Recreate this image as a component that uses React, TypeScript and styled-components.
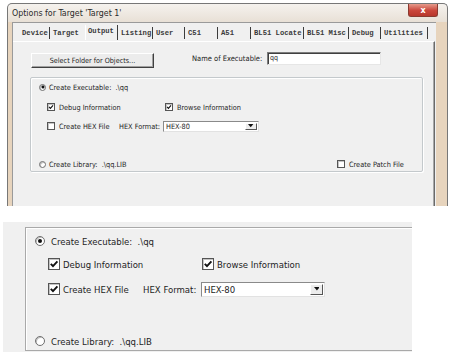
import React from "react";
import styled, { createGlobalStyle } from "styled-components";

const FONT = `"DejaVu Sans Condensed", "Liberation Sans", Arial, sans-serif`;

const GlobalStyle = createGlobalStyle`
  html, body {
    margin: 0;
    padding: 0;
    background: #fff;
  }
  body {
    width: 451px;
    height: 359px;
    overflow: hidden;
    font-family: ${FONT};
    color: #1e1e1e;
  }
`;

type Metrics = {
  font: number;
  box: number;
  radio: number;
  rowH: number;
  rowTops: number[];
  radioX: number;
  radioGap: number;
  checkX: number;
  checkGap: number;
  browseX: number;
  hexLabelX: number;
  selectX: number;
  selectW: number;
  selectH: number;
  btnW: number;
  patchX?: number;
  hexChecked: boolean;
};

const TOP: Metrics = {
  font: 7.3,
  box: 8,
  radio: 7,
  rowH: 14,
  rowTops: [2, 6, 5, 24],
  radioX: 8,
  radioGap: 3,
  checkX: 16,
  checkGap: 4,
  browseX: 134,
  hexLabelX: 88,
  selectX: 132,
  selectW: 96,
  selectH: 11,
  btnW: 12,
  patchX: 306,
  hexChecked: false,
};

const ZOOM: Metrics = {
  font: 9.5,
  box: 12,
  radio: 10,
  rowH: 18,
  rowTops: [4, 5, 7, 34],
  radioX: 9,
  radioGap: 6,
  checkX: 22,
  checkGap: 3,
  browseX: 176,
  hexLabelX: 117,
  selectX: 175,
  selectW: 124,
  selectH: 15,
  btnW: 13,
  hexChecked: true,
};

/* ---------- window chrome ---------- */

const Shot = styled.div`
  padding: 3px 0 0 7px;
`;

const Window = styled.div`
  width: 441px;
  display: flex;
  flex-direction: column;
`;

const TitleBar = styled.div`
  height: 19px;
  display: flex;
  align-items: flex-start;
  box-sizing: border-box;
  border: 1px solid #777;
  border-bottom: none;
  border-radius: 5px 5px 0 0;
  background: linear-gradient(#f5f2ee, #e8e0d6);
`;

const Title = styled.span`
  font-size: 8.8px;
  line-height: 18px;
  padding-left: 4px;
  color: #2a2a2a;
`;

const CloseButton = styled.span`
  margin-left: auto;
  margin-right: 9px;
  width: 30px;
  height: 13px;
  display: flex;
  align-items: center;
  justify-content: center;
  border: 1px solid #8a3a30;
  border-top: none;
  border-radius: 0 0 3px 3px;
  box-sizing: border-box;
  background: linear-gradient(#e69b8c, #c9453a 55%, #b8372c);
  color: #fff;
  font-family: "DejaVu Sans", sans-serif;
  font-size: 8px;
  font-weight: bold;
`;

const Frame = styled.div`
  height: 184px;
  display: flex;
  box-sizing: border-box;
  border-left: 1px solid #777;
  border-right: 1px solid #777;
  background: #e7d4bd;
  padding: 0 11px 0 4px;
`;

const Client = styled.div`
  flex: 1;
  display: flex;
  flex-direction: column;
  background: #f0f0f0;
  border-top: 1px solid #9a9a9a;
  border-left: 1px solid #9a9a9a;
`;

const TabStrip = styled.div`
  height: 18px;
  display: flex;
  align-items: flex-end;
  padding-left: 6px;
`;

const Tab = styled.span<{ $w: number; $active?: boolean; $sep?: boolean }>`
  width: ${(p) => p.$w}px;
  height: ${(p) => (p.$active ? 15 : 12)}px;
  box-sizing: border-box;
  padding: ${(p) => (p.$active ? "1px 0 0 2px" : "1px 0 0 3px")};
  border-right: ${(p) => (p.$sep === false ? "1px solid transparent" : "1px solid #3c3c3c")};
  border-left: ${(p) => (p.$active ? "1px solid #fff" : "none")};
  margin-bottom: ${(p) => (p.$active ? "1px" : "2px")};
  font-family: "Liberation Mono", "DejaVu Sans Mono", monospace;
  font-weight: bold;
  font-size: 7.2px;
  line-height: 10px;
  color: #3a3a3a;
  white-space: pre;
`;

const TabPage = styled.div`
  flex: 1;
  margin-right: 1px;
  border-top: 1px solid #fff;
  border-right: 1px solid #6a6a6a;
  box-shadow: inset -1px 0 0 #a8a8a8;
  display: flex;
  flex-direction: column;
`;

const TopRow = styled.div`
  display: flex;
  align-items: flex-start;
  margin: 10px 0 0 18px;
  height: 16px;
`;

const PushButton = styled.div`
  width: 123px;
  height: 15px;
  margin-top: 1px;
  box-sizing: border-box;
  display: flex;
  align-items: center;
  justify-content: center;
  background: #ececec;
  border: 1px solid;
  border-color: #fff #404040 #404040 #fff;
  box-shadow: inset -1px -1px 0 #a0a0a0;
  font-size: 7.2px;
  color: #1e1e1e;
`;

const FieldLabel = styled.span<{ $f: number; $w: number }>`
  width: ${(p) => p.$w}px;
  flex: none;
  font-size: ${(p) => p.$f}px;
  white-space: pre;
`;

const NameLabel = styled(FieldLabel)`
  margin-left: 38px;
  line-height: 14px;
`;

const TextInput = styled.div`
  width: 114px;
  height: 13px;
  box-sizing: border-box;
  background: #fff;
  border: 1px solid;
  border-color: #7d7d7d #e6e6e6 #e6e6e6 #7d7d7d;
  box-shadow: inset 1px 1px 0 #404040;
  font-size: 7px;
  line-height: 11px;
  padding-left: 2px;
`;

/* ---------- option group ---------- */

const GroupBox = styled.div<{ $variant: "dialog" | "zoom" }>`
  box-sizing: border-box;
  display: flex;
  flex-direction: column;
  ${(p) =>
    p.$variant === "dialog"
      ? `
    margin: 9px 0 0 17px;
    width: 393px;
    height: 95px;
    border: 1px solid #c4c9cc;
    border-radius: 2px;
    box-shadow: inset 1px 1px 0 #fff, 1px 1px 0 #fff;
  `
      : `
    height: 124px;
    border: 1px solid #a9a9a9;
    border-right: none;
    box-shadow: inset 1px 1px 0 #fff;
  `}
`;

const Row = styled.div<{ $h: number; $mt: number }>`
  display: flex;
  align-items: center;
  height: ${(p) => p.$h}px;
  margin-top: ${(p) => p.$mt}px;
`;

const Slot = styled.div<{ $ml?: number; $w?: number }>`
  display: flex;
  align-items: center;
  flex: none;
  margin-left: ${(p) => p.$ml ?? 0}px;
  width: ${(p) => (p.$w ? `${p.$w}px` : "auto")};
`;

const Label = styled.span<{ $f: number; $gap: number }>`
  font-size: ${(p) => p.$f}px;
  margin-left: ${(p) => p.$gap}px;
  white-space: pre;
  color: #1e1e1e;
`;

const CheckBox = styled.span<{ $s: number }>`
  width: ${(p) => p.$s}px;
  height: ${(p) => p.$s}px;
  flex: none;
  box-sizing: border-box;
  display: flex;
  align-items: center;
  justify-content: center;
  background: #fff;
  border: 1px solid #555;
  box-shadow: inset 1px 1px 0 #c4c4c4;
  svg {
    display: block;
  }
`;

const RadioDot = styled.span<{ $s: number; $on: boolean }>`
  position: relative;
  width: ${(p) => p.$s}px;
  height: ${(p) => p.$s}px;
  flex: none;
  box-sizing: border-box;
  border-radius: 50%;
  background: #fff;
  border: 1px solid #6f6f6f;
  box-shadow: inset 1px 1px 0 #bdbdbd;
  &::after {
    content: "";
    display: ${(p) => (p.$on ? "block" : "none")};
    position: absolute;
    left: 50%;
    top: 50%;
    width: ${(p) => Math.round(p.$s * 0.4)}px;
    height: ${(p) => Math.round(p.$s * 0.4)}px;
    transform: translate(-50%, -50%);
    border-radius: 50%;
    background: #111;
  }
`;

const SelectBox = styled.div<{ $w: number; $h: number; $f: number }>`
  width: ${(p) => p.$w}px;
  height: ${(p) => p.$h}px;
  flex: none;
  box-sizing: border-box;
  display: flex;
  align-items: center;
  background: #fff;
  border: 1px solid;
  border-color: #8a8a8a #e2e2e2 #e2e2e2 #8a8a8a;
  font-size: ${(p) => p.$f}px;
  padding-left: 2px;
`;

const SelectText = styled.span`
  flex: 1;
  white-space: pre;
`;

const DropButton = styled.span<{ $w: number }>`
  width: ${(p) => p.$w}px;
  align-self: stretch;
  margin: 1px;
  box-sizing: border-box;
  display: flex;
  align-items: center;
  justify-content: center;
  background: #ececec;
  border: 1px solid;
  border-color: #fff #555 #555 #fff;
`;

const Check = ({ s, on }: { s: number; on: boolean }) => (
  <CheckBox $s={s}>
    {on && (
      <svg width={s - 2} height={s - 2} viewBox="0 0 10 10">
        <path d="M1.8 4.8 L4 7.2 L8.4 2.4" stroke="#111" strokeWidth="1.9" fill="none" />
      </svg>
    )}
  </CheckBox>
);

const OutputOptions = ({ m, variant }: { m: Metrics; variant: "dialog" | "zoom" }) => (
  <GroupBox $variant={variant}>
    <Row $h={m.rowH} $mt={m.rowTops[0]}>
      <Slot $ml={m.radioX}>
        <RadioDot $s={m.radio} $on />
        <Label $f={m.font} $gap={m.radioGap}>Create Executable:  .\qq</Label>
      </Slot>
    </Row>
    <Row $h={m.rowH} $mt={m.rowTops[1]}>
      <Slot $ml={m.checkX} $w={m.browseX - m.checkX}>
        <Check s={m.box} on />
        <Label $f={m.font} $gap={m.checkGap}>Debug Information</Label>
      </Slot>
      <Slot>
        <Check s={m.box} on />
        <Label $f={m.font} $gap={m.checkGap}>Browse Information</Label>
      </Slot>
    </Row>
    <Row $h={m.rowH} $mt={m.rowTops[2]}>
      <Slot $ml={m.checkX} $w={m.hexLabelX - m.checkX}>
        <Check s={m.box} on={m.hexChecked} />
        <Label $f={m.font} $gap={m.checkGap}>Create HEX File</Label>
      </Slot>
      <FieldLabel $f={m.font} $w={m.selectX - m.hexLabelX}>HEX Format:</FieldLabel>
      <SelectBox $w={m.selectW} $h={m.selectH} $f={m.font}>
        <SelectText>HEX-80</SelectText>
        <DropButton $w={m.btnW}>
          <svg width={m.btnW * 0.45} height={m.btnW * 0.3} viewBox="0 0 6 4">
            <path d="M0 0 H6 L3 3.5 Z" fill="#111" />
          </svg>
        </DropButton>
      </SelectBox>
    </Row>
    <Row $h={m.rowH} $mt={m.rowTops[3]}>
      <Slot $ml={m.radioX} $w={m.patchX ? m.patchX - m.radioX : undefined}>
        <RadioDot $s={m.radio} $on={false} />
        <Label $f={m.font} $gap={m.radioGap}>Create Library:  .\qq.LIB</Label>
      </Slot>
      {m.patchX && (
        <Slot>
          <Check s={m.box} on={false} />
          <Label $f={m.font} $gap={m.checkGap}>Create Patch File</Label>
        </Slot>
      )}
    </Row>
  </GroupBox>
);

/* ---------- zoomed crop ---------- */

const Crop = styled.div`
  margin: 16px 0 0 3px;
  width: 409px;
  height: 130px;
  box-sizing: border-box;
  padding: 5px 0 0 22px;
  background: #f0f0f0;
`;

const tabs = [
  { label: "Device", w: 31 },
  { label: "Target", w: 35, sep: false },
  { label: "Output", w: 33, active: true },
  { label: "Listing", w: 35 },
  { label: "User", w: 32 },
  { label: "C51", w: 33 },
  { label: "A51", w: 33 },
  { label: "BL51 Locate", w: 53 },
  { label: "BL51 Misc", w: 45 },
  { label: "Debug", w: 32 },
  { label: "Utilities", w: 47 },
];

export default function App() {
  return (
    <>
      <GlobalStyle />
      <Shot>
        <Window>
          <TitleBar>
            <Title>Options for Target 'Target 1'</Title>
            <CloseButton>x</CloseButton>
          </TitleBar>
          <Frame>
            <Client>
              <TabStrip>
                {tabs.map((t) => (
                  <Tab key={t.label} $w={t.w} $active={t.active} $sep={t.sep}>
                    {t.label}
                  </Tab>
                ))}
              </TabStrip>
              <TabPage>
                <TopRow>
                  <PushButton>Select Folder for Objects...</PushButton>
                  <NameLabel $f={7.5} $w={75}>Name of Executable:</NameLabel>
                  <TextInput>qq</TextInput>
                </TopRow>
                <OutputOptions m={TOP} variant="dialog" />
              </TabPage>
            </Client>
          </Frame>
        </Window>
      </Shot>
      <Crop>
        <OutputOptions m={ZOOM} variant="zoom" />
      </Crop>
    </>
  );
}
